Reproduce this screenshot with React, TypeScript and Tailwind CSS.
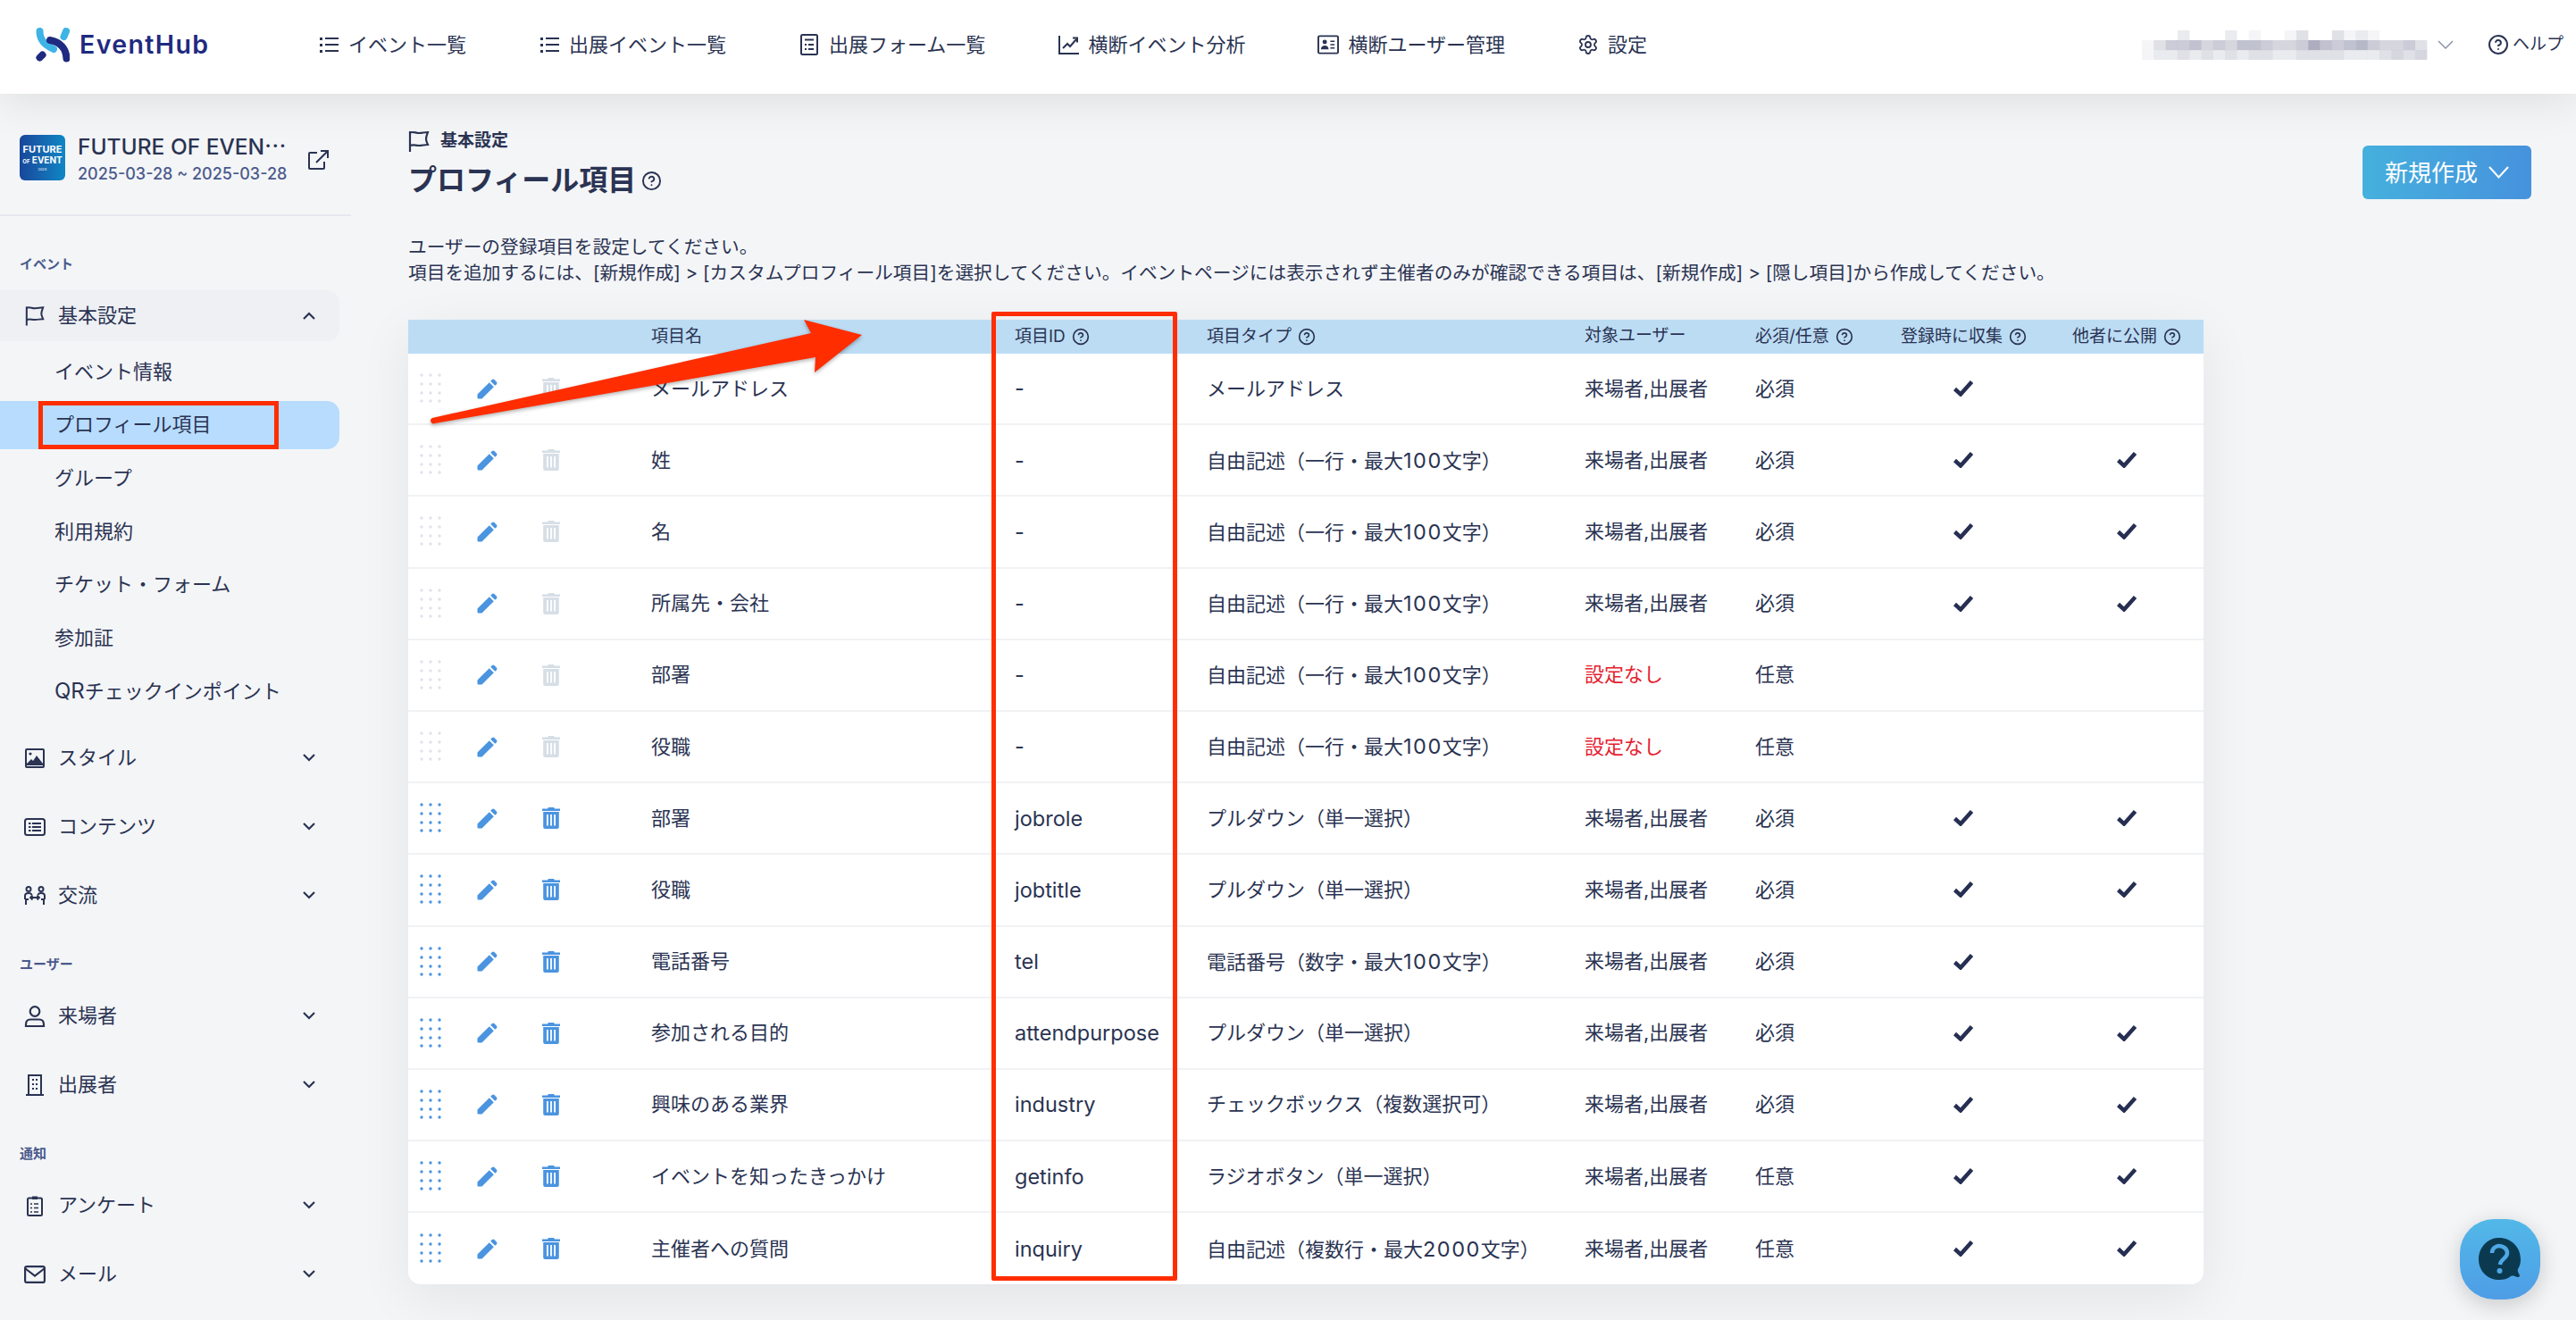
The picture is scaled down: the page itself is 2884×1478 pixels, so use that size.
import type { ReactNode } from "react";
import { CircleHelp, Settings } from "lucide-react";

const stroke = "#2a3352";

const ListIcon = () => (
  <svg width="22" height="20" viewBox="0 0 22 20" fill="none" stroke={stroke} strokeWidth="2">
    <path d="M7 3h15M7 10h15M7 17h15" />
    <path d="M1 2h3v3H1zM1 9h3v3H1zM1 16h3v3H1z" fill={stroke} strokeWidth="0" />
  </svg>
);

const FormIcon = () => (
  <svg width="20" height="24" viewBox="0 0 20 24" fill="none" stroke={stroke} strokeWidth="2">
    <rect x="1" y="1" width="18" height="22" rx="1.5" />
    <path d="M5 6.5h10" />
    <path d="M5 12h2M9 12h6M5 17h2M9 17h6" />
  </svg>
);

const ChartIcon = () => (
  <svg width="23" height="22" viewBox="0 0 23 22" fill="none" stroke={stroke} strokeWidth="2">
    <path d="M1 1v20h22" />
    <path d="M5 15l5-5 3 3 7-8" />
    <path d="M16 3.5h5v5" />
  </svg>
);

const CardIcon = () => (
  <svg width="25" height="22" viewBox="0 0 25 22" fill="none" stroke={stroke} strokeWidth="2">
    <rect x="1" y="1" width="23" height="20" rx="1.5" />
    <circle cx="8.5" cy="8" r="2.6" fill={stroke} strokeWidth="0" />
    <path d="M4 16.5c0-3 2-4.5 4.5-4.5s4.5 1.5 4.5 4.5z" fill={stroke} strokeWidth="0" />
    <path d="M15 7h5M15 11h5M15 15h5" strokeWidth="1.6" />
  </svg>
);

const FlagIcon = ({ big }: { big?: boolean }) => (
  <svg width={big ? 24 : 22} height={big ? 24 : 23} viewBox="0 0 24 24" fill="none" stroke={stroke} strokeWidth="2.2">
    <path d="M2 1v23" />
    <path d="M2 2.5c4-1.5 6 .5 10 .5 4 0 6-1 10-1-1 3-2 5-2 7.5s1 4 2 6.500c-4 0-6 1-10 1s-6-1.500-10 0" />
  </svg>
);

const ImageIcon = () => (
  <svg width="22" height="22" viewBox="0 0 22 22" fill="none" stroke={stroke} strokeWidth="2">
    <rect x="1" y="1" width="20" height="20" rx="1" />
    <circle cx="6" cy="6" r="1.600" fill={stroke} strokeWidth="0" />
    <path d="M2 17l5-5 2 2 4-6 7 9v2H2z" fill={stroke} strokeWidth="0" />
  </svg>
);

const ContentIcon = () => (
  <svg width="24" height="20" viewBox="0 0 24 20" fill="none" stroke={stroke} strokeWidth="2">
    <rect x="1" y="1" width="22" height="18" rx="2.500" />
    <path d="M9 6h10M9 10h10M9 14h10" />
    <path d="M5 5h2.500v2H5zM5 9h2.500v2H5zM5 13h2.500v2H5z" fill={stroke} strokeWidth="0" />
  </svg>
);

const PeopleIcon = () => (
  <svg width="26" height="22" viewBox="0 0 26 22" fill="none" stroke={stroke} strokeWidth="2">
    <circle cx="6" cy="3.500" r="2.500" />
    <circle cx="20" cy="3.500" r="2.500" />
    <path d="M2 15v-4c0-2 1.500-3 4-3 2 0 3 .5 3.500 2M24 15v-4c0-2-1.500-3-4-3-2 0-3 .5-3.500 2" />
    <path d="M3 21V15h3M23 21V15h-3" />
    <path d="M8 13h10M10.500 10.500L8 13l2.500 2.500M15.500 10.500L18 13l-2.500 2.500" strokeWidth="1.800" />
  </svg>
);

const UserIcon = () => (
  <svg width="24" height="24" viewBox="0 0 24 24" fill="none" stroke={stroke} strokeWidth="2.200">
    <circle cx="12" cy="6.500" r="5.300" />
    <path d="M2 21c0-3.500 1.500-5.500 5-5.500h10c3.500 0 5 2 5 5.500v2H2z" />
  </svg>
);

const BuildingIcon = () => (
  <svg width="20" height="24" viewBox="0 0 20 24" fill="none" stroke={stroke} strokeWidth="2">
    <path d="M3 23V1h14v22M0 23h20" />
    <path d="M7 5h2v2H7zM11 5h2v2h-2zM7 10h2v2H7zM11 10h2v2h-2zM7 15h2v2H7zM11 15h2v2h-2z" fill={stroke} strokeWidth="0" />
  </svg>
);

const ClipboardIcon = () => (
  <svg width="18" height="24" viewBox="0 0 18 24" fill="none" stroke={stroke} strokeWidth="2">
    <rect x="1" y="3.500" width="16" height="19.500" rx="1.500" />
    <path d="M6 1.500h6v3.500H6z" fill={stroke} strokeWidth="0" />
    <path d="M8 10h5M8 14.500h5M8 19h5" strokeWidth="1.400" />
    <path d="M4 10h2M4 14.500h2M4 19h2" strokeWidth="1.400" />
  </svg>
);

const MailIcon = () => (
  <svg width="24" height="20" viewBox="0 0 24 20" fill="none" stroke={stroke} strokeWidth="2.200">
    <rect x="1.100" y="1.100" width="21.800" height="17.800" rx="2" />
    <path d="M1.500 3.500L12 11.500 22.500 3.500" />
  </svg>
);

const Chevron = ({ up }: { up?: boolean }) => (
  <svg width="14" height="9" viewBox="0 0 14 9" fill="none" stroke={stroke} strokeWidth="2.200">
    <path d={up ? "M1 8l6-6 6 6" : "M1 1l6 6 6-6"} />
  </svg>
);

const DragDots = ({ color }: { color: string }) => (
  <svg width="24" height="34" viewBox="0 0 24 34" fill={color}>
    {[3, 13, 23, 32].map((y) =>
      [2, 12, 22].map((x) => <circle key={`${x}-${y}`} cx={x} cy={y - 1} r="1.700" />),
    )}
  </svg>
);

const PencilIcon = () => (
  <svg width="23" height="23" viewBox="0 0 23 23" fill="#4a94e0">
    <path d="M0.500 17.500L13.800 4.200l5 5L5.500 22.500H1.500a1 1 0 0 1-1-1z" />
    <path d="M15.200 2.800l1.600-1.600a2 2 0 0 1 2.800 0l2.200 2.200a2 2 0 0 1 0 2.800l-1.600 1.600z" />
  </svg>
);

const TrashIcon = ({ color }: { color: string }) => (
  <svg width="20" height="24" viewBox="0 0 20 24" fill={color}>
    <path d="M7 0h6l1 1.400h6v2.600H0V1.400h6z" />
    <path
      fillRule="evenodd"
      d="M1.200 5h17.600v17a2 2 0 0 1-2 2H3.200a2 2 0 0 1-2-2zM5 8v12.500h1.800V8zM9.100 8v12.500h1.800V8zM13.200 8v12.500H15V8z"
    />
  </svg>
);

const Check = () => (
  <svg width="22" height="18" viewBox="0 0 22 18" fill="none" stroke="#262f52" strokeWidth="4.500">
    <path d="M1.500 9.500l6.500 6 12.500-14" />
  </svg>
);

const navItems: { icon: ReactNode; label: string }[] = [
  { icon: <ListIcon />, label: "イベント一覧" },
  { icon: <ListIcon />, label: "出展イベント一覧" },
  { icon: <FormIcon />, label: "出展フォーム一覧" },
  { icon: <ChartIcon />, label: "横断イベント分析" },
  { icon: <CardIcon />, label: "横断ユーザー管理" },
  { icon: <Settings size={24} strokeWidth={1.8} color={stroke} />, label: "設定" },
];

// モザイク部分の濃さ
const blurTop = [0, 0, 0, 2, 0, 0, 0, 2, 0, 1, 0, 0, 1, 3, 0, 0, 3, 1, 2, 1, 0, 0, 0];
const blurMid = [1, 3, 5, 5, 6, 4, 5, 4, 6, 6, 5, 4, 4, 5, 8, 6, 5, 6, 7, 5, 4, 4, 5, 3];
const blurBot = [1, 2, 2, 3, 2, 3, 2, 3, 2, 3, 3, 2, 2, 3, 3, 3, 3, 2, 2, 2, 3, 4, 3, 4];

const BlurredName = () => (
  <svg width="320" height="33" viewBox="0 0 320 33">
    {[blurTop, blurMid, blurBot].map((row, r) =>
      row.map((v, i) => (
        <rect key={`${r}-${i}`} x={i * 13.3} y={r * 11} width="13.4" height="11.100" fill="#8c8ea6" opacity={v * 0.09} />
      )),
    )}
  </svg>
);

const Header = () => (
  <header className="relative z-10 flex h-[105px] items-center bg-white pb-[5px] pr-[14px] shadow-[0_6px_50px_rgba(0,0,0,0.1)]">
    <div className="flex w-[356px] shrink-0 items-center gap-[11px] pl-10">
      <svg width="38" height="39" viewBox="0 0 38 39" fill="none" strokeWidth="8" strokeLinecap="round">
        <path d="M4.500 4C4.500 14 10 19 20 24" stroke="#3eb3e6" />
        <path d="M34 4l-2.500 6" stroke="#3eb3e6" />
        <path d="M16 14c12 2 18 10 18.500 20.500" stroke="#1f2a80" />
        <path d="M4.500 33.500L7.500 30.500" stroke="#1f2a80" />
      </svg>
      <span className="text-[28.5px] font-semibold tracking-[1.4px] text-[#1f2a80]">EventHub</span>
    </div>
    <nav className="flex items-center gap-[81px]">
      {navItems.map((n) => (
        <div key={n.label} className="flex items-center gap-[10px] text-[22px] text-[#2a3352]">
          <span className="flex w-[24px] justify-center">{n.icon}</span>
          <span>{n.label}</span>
        </div>
      ))}
    </nav>
    <div className="ml-auto flex items-center">
      <BlurredName />
      <svg width="18" height="10" viewBox="0 0 18 10" fill="none" stroke="#8f95a8" strokeWidth="1.500" className="ml-[11px]">
        <path d="M1 1l8 8 8-8" />
      </svg>
      <CircleHelp size={24} strokeWidth={2} color={stroke} className="ml-[38px]" />
      <span className="ml-[4px] text-[19px] text-[#2a3352]">ヘルプ</span>
    </div>
  </header>
);

const MenuRow = ({ icon, label, open, active }: { icon: ReactNode; label: string; open?: boolean; active?: boolean }) => (
  <div
    className={`flex h-[57px] w-[380px] items-center rounded-r-[14px] pl-[25px] pr-[27px] text-[22px] text-[#2a3352] ${active ? "bg-[#eef0f4]" : ""}`}
  >
    <span className="flex w-[28px] justify-center">{icon}</span>
    <span className="ml-[12px]">{label}</span>
    <span className="ml-auto">
      <Chevron up={open} />
    </span>
  </div>
);

const SectionLabel = ({ children, className }: { children: ReactNode; className: string }) => (
  <div className={`h-[22px] pl-[22px] text-[15px] leading-[22px] font-bold text-[#4a5a8c] ${className}`}>{children}</div>
);

const subItems = ["イベント情報", "プロフィール項目", "グループ", "利用規約", "チケット・フォーム", "参加証"];

const Sidebar = () => (
  <aside className="w-[393px] shrink-0">
    <div className="flex h-[137px] border-b-2 border-[#e6e8ef] pl-[22px] pt-[46px]">
      <div className="flex h-[51px] w-[51px] shrink-0 flex-col items-center justify-center overflow-hidden rounded-[6px] bg-gradient-to-r from-[#18479a] to-[#0f87c6] text-white">
        <span className="text-[11px] leading-[12px] font-bold">FUTURE</span>
        <span className="text-[10px] leading-[12px] font-bold whitespace-nowrap">
          <span className="text-[6px]">OF</span> EVENT
        </span>
        <span className="text-[4px] leading-[6px]">2024</span>
      </div>
      <div className="ml-[14px] flex w-[240px] flex-col">
        <span className="-mt-[2px] text-[24.5px] leading-[30px] font-medium whitespace-nowrap text-[#2a3352]">FUTURE OF EVEN⋯</span>
        <span className="mt-[2px] text-[18px] leading-[28px] font-medium whitespace-nowrap text-[#4a5a8c]">2025-03-28 ~ 2025-03-28</span>
      </div>
      <svg width="23" height="22" viewBox="0 0 23 22" fill="none" stroke={stroke} strokeWidth="2" className="ml-[18px] mt-[17px]">
        <path d="M10 3H2a1 1 0 0 0-1 1v16a1 1 0 0 0 1 1h15a1 1 0 0 0 1-1v-7" />
        <path d="M9 14L21.500 1.500M14 1h8v8" />
      </svg>
    </div>
    <SectionLabel className="mt-[43px]">イベント</SectionLabel>
    <div className="mt-[18px]">
      <MenuRow icon={<FlagIcon />} label="基本設定" open active />
    </div>
    <div className="mt-[7px] flex flex-col gap-[5.7px]">
      {subItems.map((s) =>
        s === "プロフィール項目" ? (
          <div key={s} className="relative flex h-[54px] w-[380px] items-center rounded-r-[14px] bg-[#b8dcfd] pl-[61px] text-[22px] text-[#2a3352]">
            {s}
            <div className="absolute left-[43px] top-0 h-[54px] w-[269px] border-[5px] border-[#ff2d00]" />
          </div>
        ) : (
          <div key={s} className="flex h-[54px] items-center pl-[61px] text-[22px] text-[#2a3352]">
            {s}
          </div>
        ),
      )}
      <div className="flex h-[54px] items-center pl-[61px] text-[22px] text-[#2a3352]">
        <span className="text-[24px]">QR</span>チェックインポイント
      </div>
    </div>
    <div className="mt-[19px] flex flex-col gap-[20px]">
      <MenuRow icon={<ImageIcon />} label="スタイル" />
      <MenuRow icon={<ContentIcon />} label="コンテンツ" />
      <MenuRow icon={<PeopleIcon />} label="交流" />
    </div>
    <SectionLabel className="mt-[38px]">ユーザー</SectionLabel>
    <div className="mt-[18px] flex flex-col gap-[20px]">
      <MenuRow icon={<UserIcon />} label="来場者" />
      <MenuRow icon={<BuildingIcon />} label="出展者" />
    </div>
    <SectionLabel className="mt-[38px]">通知</SectionLabel>
    <div className="mt-[18px] flex flex-col gap-[20px]">
      <MenuRow icon={<ClipboardIcon />} label="アンケート" />
      <MenuRow icon={<MailIcon />} label="メール" />
    </div>
  </aside>
);

const rows: [string, string, string, string, string, boolean, boolean, boolean][] = [
  ["メールアドレス", "-", "メールアドレス", "来場者,出展者", "必須", true, false, false],
  ["姓", "-", "自由記述（一行・最大100文字）", "来場者,出展者", "必須", true, true, false],
  ["名", "-", "自由記述（一行・最大100文字）", "来場者,出展者", "必須", true, true, false],
  ["所属先・会社", "-", "自由記述（一行・最大100文字）", "来場者,出展者", "必須", true, true, false],
  ["部署", "-", "自由記述（一行・最大100文字）", "設定なし", "任意", false, false, false],
  ["役職", "-", "自由記述（一行・最大100文字）", "設定なし", "任意", false, false, false],
  ["部署", "jobrole", "プルダウン（単一選択）", "来場者,出展者", "必須", true, true, true],
  ["役職", "jobtitle", "プルダウン（単一選択）", "来場者,出展者", "必須", true, true, true],
  ["電話番号", "tel", "電話番号（数字・最大100文字）", "来場者,出展者", "必須", true, false, true],
  ["参加される目的", "attendpurpose", "プルダウン（単一選択）", "来場者,出展者", "必須", true, true, true],
  ["興味のある業界", "industry", "チェックボックス（複数選択可）", "来場者,出展者", "必須", true, true, true],
  ["イベントを知ったきっかけ", "getinfo", "ラジオボタン（単一選択）", "来場者,出展者", "任意", true, true, true],
  ["主催者への質問", "inquiry", "自由記述（複数行・最大2000文字）", "来場者,出展者", "任意", true, true, true],
];

const gridCols = "grid grid-cols-[272px_407px_215px_423px_191px_152px_162px_188px]";

// 数字だけ少し大きく
const TypeText = ({ text }: { text: string }) => (
  <>
    {text.split(/(\d+)/).map((part, i) =>
      i % 2 === 1 ? (
        <span key={i} className="text-[23.5px] tracking-[1.5px]">
          {part}
        </span>
      ) : (
        part
      ),
    )}
  </>
);

const HeadHelp = ({ label, className }: { label: string; className?: string }) => (
  <div className={`flex items-center gap-[7px] ${className ?? ""}`}>
    <span>{label}</span>
    <CircleHelp size={20} strokeWidth={2} color={stroke} />
  </div>
);

const ProfileTable = () => (
  <div className="mt-[38px] w-[2010px] rounded-b-[14px] bg-white shadow-[0_16px_60px_rgba(0,0,0,0.07)]">
    <div className="flex h-[38px] items-center bg-[#bcdcf4] text-[19px] text-[#2a3352]">
      <div className="w-[272px]" />
      <div className="w-[407px]">項目名</div>
      <HeadHelp label="項目ID" className="w-[215px]" />
      <HeadHelp label="項目タイプ" className="w-[423px]" />
      <div className="w-[191px] -translate-y-[1px]">対象ユーザー</div>
      <HeadHelp label="必須/任意" className="w-[163px]" />
      <HeadHelp label="登録時に収集" className="w-[192px]" />
      <HeadHelp label="他者に公開" />
    </div>
    {rows.map((r, i) => (
      <div
        key={i}
        className={`${gridCols} h-[80.2px] items-center text-[22px] text-[#2a3352] ${i < rows.length - 1 ? "border-b-2 border-[#f1f2f4]" : ""}`}
      >
        <div className="flex items-center pl-[13px]">
          <DragDots color={r[7] ? "#4a94e0" : "#dfe3ec"} />
          <span className="ml-[40px]">
            <PencilIcon />
          </span>
          <span className="ml-[50px]">
            <TrashIcon color={r[7] ? "#4a94e0" : "#d6dee6"} />
          </span>
        </div>
        <div>{r[0]}</div>
        <div className="text-[23.5px]">{r[1]}</div>
        <div>
          <TypeText text={r[2]} />
        </div>
        <div className={r[3] === "設定なし" ? "text-[#e5202f]" : ""}>{r[3]}</div>
        <div>{r[4]}</div>
        <div className="flex justify-center">{r[5] ? <Check /> : null}</div>
        <div className="pl-[91px]">{r[6] ? <Check /> : null}</div>
      </div>
    ))}
  </div>
);

const Main = () => (
  <main className="flex-1 pl-[64px] pr-[50px] pt-[42px]">
    <div className="flex items-start justify-between">
      <div>
        <div className="flex h-[22px] items-center gap-[12px] text-[19px] font-bold text-[#2a3352]">
          <FlagIcon big />
          <span>基本設定</span>
        </div>
        <div className="mt-[10px] flex items-center gap-[6px]">
          <h1 className="text-[32px] leading-[46px] font-bold text-[#2a3352]">プロフィール項目</h1>
          <CircleHelp size={23} strokeWidth={2} color={stroke} />
        </div>
      </div>
      <button className="mt-[16px] flex h-[60px] w-[189px] items-center justify-center gap-[12px] rounded-[6px] bg-gradient-to-r from-[#45b0dd] to-[#4692dd] text-[26px] text-white">
        新規作成
        <svg width="23" height="14" viewBox="0 0 23 14" fill="none" stroke="white" strokeWidth="2">
          <path d="M1 1l10.500 11.500L22 1" />
        </svg>
      </button>
    </div>
    <p className="mt-[37px] text-[20.7px] leading-[29px] text-[#2a3352]">
      ユーザーの登録項目を設定してください。
      <br />
      項目を追加するには、[新規作成] &gt; [カスタムプロフィール項目]を選択してください。イベントページには表示されず主催者のみが確認できる項目は、[新規作成] &gt; [隠し項目]から作成してください。
    </p>
    <ProfileTable />
  </main>
);

export default function App() {
  return (
    <div lang="ja" className="relative h-[1478px] w-[2884px] overflow-hidden bg-[#f4f5f7] font-['Inter','Noto_Sans_CJK_JP',sans-serif] [text-spacing-trim:space-all]">
      <Header />
      <div className="flex">
        <Sidebar />
        <Main />
      </div>
      {/* 注釈: 赤枠と矢印 */}
      <div className="absolute left-[1110px] top-[349px] h-[1085px] w-[208px] rounded-[2px] border-[5px] border-[#ff2d00]" />
      <svg className="absolute left-0 top-0" width="2884" height="1478" viewBox="0 0 2884 1478">
        <path
          d="M484 468L908 373 900 358 965 375 912 417 913 400 487 474a3 3 0 0 1-3-6z"
          fill="#ff2d00"
          style={{ filter: "drop-shadow(0 2px 2px rgba(0,0,0,0.3))" }}
        />
      </svg>
      {/* ヘルプボタン */}
      <div className="absolute left-[2754px] top-[1365px] flex h-[90px] w-[90px] items-center justify-center rounded-[38px] bg-gradient-to-b from-[#52b8e8] to-[#4e9de6] shadow-[0_6px_24px_rgba(0,0,0,0.18)]">
        <svg width="50" height="50" viewBox="0 0 50 50">
          <path d="M24 1c13 0 24 10 24 24 0 4-1 8-3 11-1 2 1 5 2 7 0 2-2 2-3 2-2-1-5-2-7-1-4 3-8 4-13 4C11 48 1 38 1 25S11 1 24 1z" fill="#0b3a50" />
          <path d="M16 18c0-5 4-8 8-8s9 3 9 8c0 6-7 6-8 13" fill="none" stroke="#4fa8e6" strokeWidth="4.500" />
          <circle cx="24.500" cy="38" r="3" fill="#4fa8e6" />
        </svg>
      </div>
    </div>
  );
}
